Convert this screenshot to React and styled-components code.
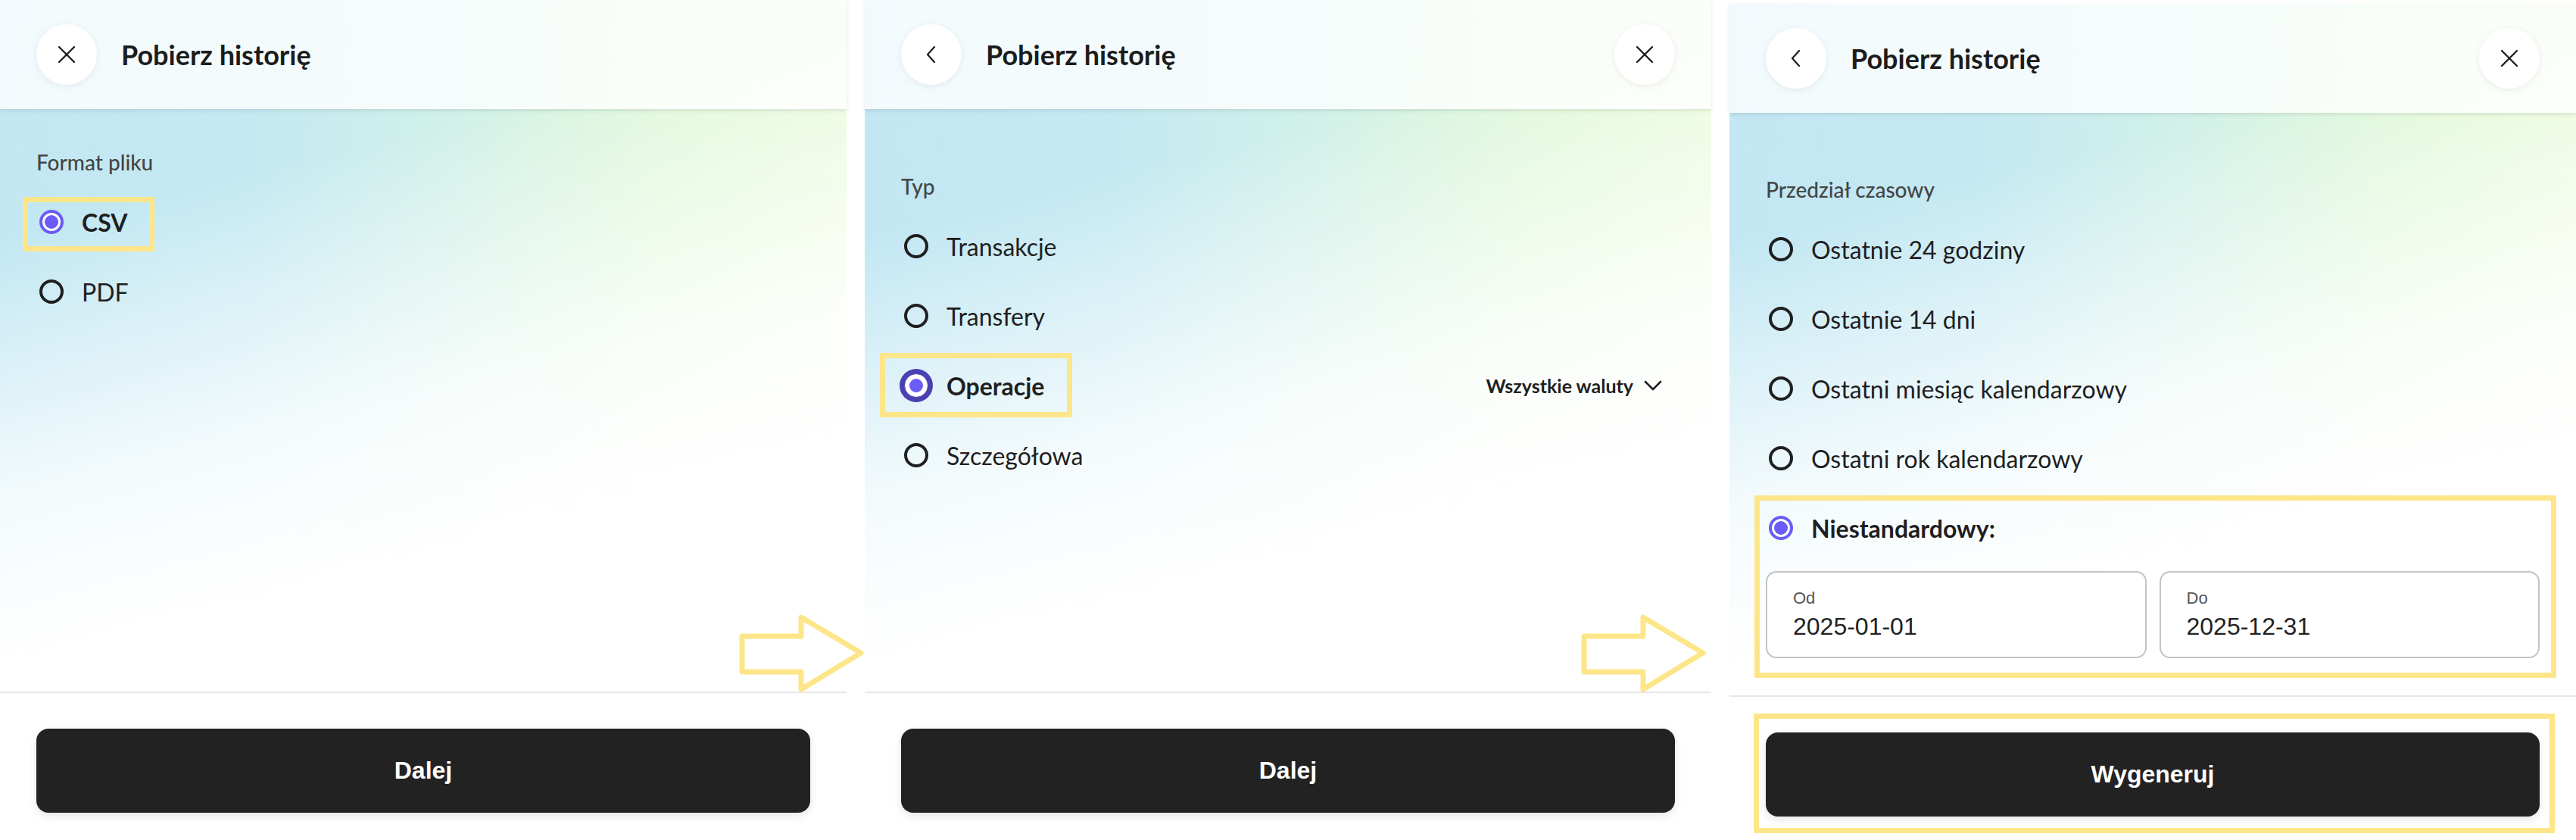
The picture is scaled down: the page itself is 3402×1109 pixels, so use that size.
import React from "react";
import styled, { createGlobalStyle } from "styled-components";

const GlobalStyle = createGlobalStyle`
  body {
    margin: 0;
    background: #ffffff;
    font-family: Lato, "Noto Sans", sans-serif;
    color: #1f1f1f;
  }
`;

const Page = styled.div`
  position: relative;
  display: flex;
  gap: 24px;
  width: 3402px;
  height: 1109px;
  overflow: hidden;
  background: #ffffff;
`;

const Panel = styled.section`
  flex: none;
  width: 1118px;
  height: 1109px;
  margin-top: ${props => props.$offset || 0}px;
  display: flex;
  flex-direction: column;
`;

const Sheet = styled.div`
  flex: none;
  height: 913px;
  display: flex;
  flex-direction: column;
  background:
    linear-gradient(166deg, rgba(255, 255, 255, 0) 26%, rgba(255, 255, 255, 0.82) 56%, #ffffff 74%),
    linear-gradient(90deg, #c2e7f3 0%, #c5e9f2 30%, #d2f1e8 55%, #e0f8da 78%, #eafbdb 100%);
`;

const Header = styled.header`
  position: relative;
  z-index: 1;
  flex: none;
  height: 144px;
  display: flex;
  align-items: center;
  padding: 0 48px;
  background: rgba(255, 255, 255, 0.8);
  box-shadow: 0 2px 5px rgba(0, 0, 0, 0.1);
`;

const IconButton = styled.button`
  flex: none;
  width: 80px;
  height: 80px;
  border: none;
  border-radius: 50%;
  background: #ffffff;
  box-shadow: 0 2px 10px rgba(0, 0, 0, 0.07);
  display: flex;
  align-items: center;
  justify-content: center;
  padding: 0;
  margin-left: ${props => (props.$end ? "auto" : "0")};
  color: #1f1f1f;
`;

const Title = styled.h1`
  margin: 0 0 0 32px;
  font-size: 36px;
  font-weight: 700;
  color: #1c1c1c;
`;

const Body = styled.div`
  flex: 1;
  padding: ${props => props.$top}px 48px 0;
`;

const SectionLabel = styled.div`
  font-size: 28px;
  line-height: 40px;
  font-weight: 500;
  color: #454545;
`;

const OptionList = styled.div`
  margin-top: 13px;
  display: flex;
  flex-direction: column;
`;

const OptionRow = styled.div`
  position: relative;
  height: 92px;
  display: flex;
  align-items: center;
`;

const RadioMark = styled.span`
  flex: none;
  box-sizing: border-box;
  width: 32px;
  height: 32px;
  margin: 0 24px 0 4px;
  border-radius: 50%;
  border: ${props =>
    props.$focused
      ? "1px solid #4b40b2"
      : props.$checked
      ? "4px solid #6c5cf5"
      : "4px solid #1f1f1f"};
  background: ${props => (props.$checked ? "#ffffff" : "transparent")};
  box-shadow: ${props => (props.$focused ? "0 0 0 6px #4b40b2" : "none")};
  display: flex;
  align-items: center;
  justify-content: center;

  &::after {
    content: "";
    display: ${props => (props.$checked ? "block" : "none")};
    width: 18px;
    height: 18px;
    border-radius: 50%;
    background: #6c5cf6;
  }
`;

const OptionText = styled.span`
  font-size: 32px;
  font-weight: ${props => (props.$bold ? 700 : 400)};
  color: #1f1f1f;
`;

const CurrencyPicker = styled.div`
  margin-left: auto;
  margin-right: 17px;
  display: flex;
  align-items: center;
  gap: 14px;
  font-size: 25px;
  font-weight: 700;
  color: #1f1f1f;
`;

const Highlight = styled.span`
  position: absolute;
  box-sizing: border-box;
  top: ${props => props.$top}px;
  left: ${props => props.$left}px;
  width: ${props => (props.$width ? `${props.$width}px` : "auto")};
  height: ${props => (props.$height ? `${props.$height}px` : "auto")};
  right: ${props => (props.$right !== undefined ? `${props.$right}px` : "auto")};
  bottom: ${props => (props.$bottom !== undefined ? `${props.$bottom}px` : "auto")};
  border: 7px solid #fde68a;
  pointer-events: none;
`;

const CustomBlock = styled.div`
  position: relative;
`;

const DateGrid = styled.div`
  display: grid;
  grid-template-columns: 1fr 1fr;
  gap: 17px;
  margin-top: 11px;
`;

const DateField = styled.label`
  box-sizing: border-box;
  height: 115px;
  padding: 21px 34px 0;
  border: 2px solid #c4c4c4;
  border-radius: 14px;
  background: #ffffff;
  display: flex;
  flex-direction: column;
  font-family: "Liberation Sans", Arial, sans-serif;
`;

const DateLabel = styled.span`
  font-size: 22px;
  line-height: 26px;
  color: #555555;
`;

const DateValue = styled.span`
  margin-top: 5px;
  font-size: 32px;
  line-height: 38px;
  color: #222222;
`;

const Footer = styled.footer`
  flex: none;
  border-top: 2px solid #e6e6e6;
  padding: 47px 48px 0;
  background: #ffffff;
`;

const ButtonWrap = styled.div`
  position: relative;
`;

const PrimaryButton = styled.button`
  display: block;
  width: 100%;
  height: 111px;
  border: none;
  border-radius: 16px;
  background: #222222;
  color: #ffffff;
  font-family: "Liberation Sans", Arial, sans-serif;
  font-size: 32px;
  font-weight: 700;
  box-shadow: 0 4px 12px rgba(0, 0, 0, 0.1);
`;

const StepArrow = styled.svg`
  position: absolute;
  top: 811px;
  left: ${props => props.$left}px;
  width: 166px;
  height: 104px;
  pointer-events: none;
`;

const CloseIcon = () => (
  <svg width="24" height="24" viewBox="0 0 24 24" fill="none" stroke="#1f1f1f" strokeWidth="2.4" strokeLinecap="round">
    <path d="M2 2 L22 22 M22 2 L2 22" />
  </svg>
);

const BackIcon = () => (
  <svg width="14" height="22" viewBox="0 0 14 22" fill="none" stroke="#1f1f1f" strokeWidth="2.2" strokeLinecap="round" strokeLinejoin="round">
    <path d="M11 1 L2 11 L11 21" />
  </svg>
);

const ChevronDown = () => (
  <svg width="24" height="14" viewBox="0 0 24 14" fill="none" stroke="#1f1f1f" strokeWidth="2.6" strokeLinecap="round" strokeLinejoin="round">
    <path d="M2 2 L12 12 L22 2" />
  </svg>
);

const Arrow = ({ left }) => (
  <StepArrow $left={left} viewBox="0 0 166 104">
    <polygon
      points="4,29 82,29 82,4 161,51 82,99 82,76 4,76"
      fill="none"
      stroke="#fde68a"
      strokeWidth="7"
      strokeLinejoin="round"
    />
  </StepArrow>
);

const Option = ({ label, checked, focused, children, highlight }) => (
  <OptionRow>
    <RadioMark $checked={checked} $focused={focused} />
    <OptionText $bold={checked}>{label}</OptionText>
    {children}
    {highlight && (
      <Highlight
        $top={highlight.top}
        $left={highlight.left}
        $width={highlight.width}
        $height={highlight.height}
      />
    )}
  </OptionRow>
);

const PanelHeader = ({ back }) => (
  <Header>
    <IconButton>{back ? <BackIcon /> : <CloseIcon />}</IconButton>
    <Title>Pobierz historię</Title>
    {back && (
      <IconButton $end>
        <CloseIcon />
      </IconButton>
    )}
  </Header>
);

const PanelFooter = ({ label, highlighted }) => (
  <Footer>
    <ButtonWrap>
      <PrimaryButton>{label}</PrimaryButton>
      {highlighted && <Highlight $top={-25} $left={-16} $right={-20} $bottom={-22} />}
    </ButtonWrap>
  </Footer>
);

export default function App() {
  return (
    <Page>
      <GlobalStyle />

      <Panel>
        <Sheet>
          <PanelHeader />
          <Body $top={50}>
            <SectionLabel>Format pliku</SectionLabel>
            <OptionList>
              <Option
                label="CSV"
                checked
                highlight={{ top: 13, left: -18, width: 174, height: 72 }}
              />
              <Option label="PDF" />
            </OptionList>
          </Body>
        </Sheet>
        <PanelFooter label="Dalej" />
      </Panel>

      <Panel>
        <Sheet>
          <PanelHeader back />
          <Body $top={82}>
            <SectionLabel>Typ</SectionLabel>
            <OptionList>
              <Option label="Transakcje" />
              <Option label="Transfery" />
              <Option
                label="Operacje"
                checked
                focused
                highlight={{ top: 3, left: -28, width: 254, height: 85 }}
              >
                <CurrencyPicker>
                  Wszystkie waluty
                  <ChevronDown />
                </CurrencyPicker>
              </Option>
              <Option label="Szczegółowa" />
            </OptionList>
          </Body>
        </Sheet>
        <PanelFooter label="Dalej" />
      </Panel>

      <Panel $offset={5}>
        <Sheet>
          <PanelHeader back />
          <Body $top={81}>
            <SectionLabel>Przedział czasowy</SectionLabel>
            <OptionList>
              <Option label="Ostatnie 24 godziny" />
              <Option label="Ostatnie 14 dni" />
              <Option label="Ostatni miesiąc kalendarzowy" />
              <Option label="Ostatni rok kalendarzowy" />
              <CustomBlock>
                <Option label="Niestandardowy:" checked />
                <DateGrid>
                  <DateField>
                    <DateLabel>Od</DateLabel>
                    <DateValue>2025-01-01</DateValue>
                  </DateField>
                  <DateField>
                    <DateLabel>Do</DateLabel>
                    <DateValue>2025-12-31</DateValue>
                  </DateField>
                </DateGrid>
                <Highlight $top={3} $left={-15} $right={-22} $bottom={-26} />
              </CustomBlock>
            </OptionList>
          </Body>
        </Sheet>
        <PanelFooter label="Wygeneruj" highlighted />
      </Panel>

      <Arrow left={976} />
      <Arrow left={2088} />
    </Page>
  );
}
